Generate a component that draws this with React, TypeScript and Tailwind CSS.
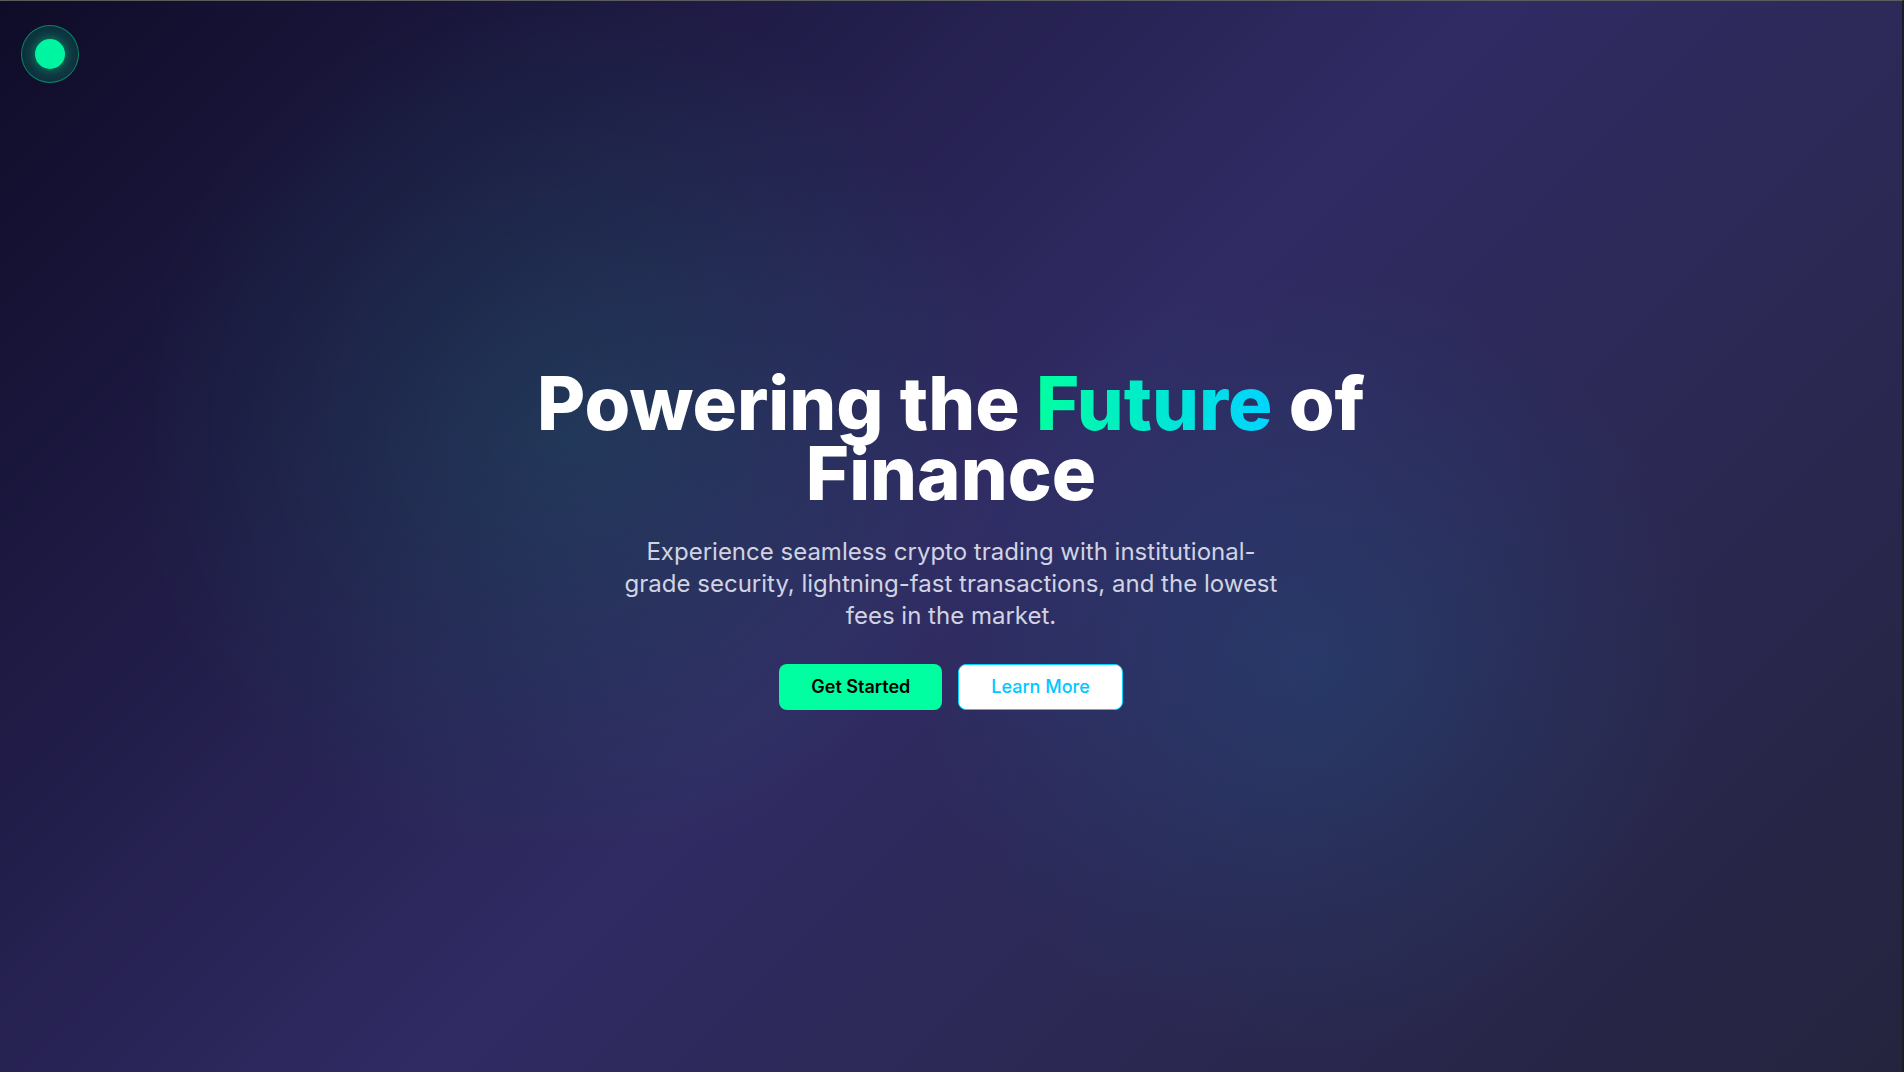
export default function App() {
  return (
    <div className="relative flex min-h-screen w-full flex-col items-center justify-center overflow-hidden border-t border-r-2 border-t-[#5c5c5c] border-r-[#1c1c24] bg-[radial-gradient(circle_at_30%_40%,rgba(0,255,170,0.1),transparent_30%),radial-gradient(circle_at_69%_62%,rgba(0,200,255,0.1),transparent_27%),linear-gradient(135deg,#0f0c29_0%,#302b63_50%,#24243e_100%)] font-['Inter',sans-serif]">
      <div className="absolute left-[21px] top-[24px] flex h-[58px] w-[58px] items-center justify-center rounded-full border border-[#00ffa0]/40 bg-[#00ffa0]/15">
        <div className="h-[30px] w-[30px] rounded-full bg-[#00f5a0] shadow-[0_0_12px_rgba(0,255,160,0.5)]" />
      </div>

      <main className="flex flex-col items-center px-6 pt-[4px] text-center">
        <h1 className="text-[74px] font-extrabold leading-[70px] text-white">
          Powering the{" "}
          <span className="bg-[linear-gradient(90deg,#00ffa0,#00d4ff)] bg-clip-text text-transparent">
            Future
          </span>{" "}
          of
          <br />
          Finance
        </h1>
        <p className="mt-7 max-w-2xl text-2xl leading-8 text-[#d2d3e2]">
          Experience seamless crypto trading with institutional-grade security,
          lightning-fast transactions, and the lowest fees in the market.
        </p>
        <div className="mt-8 flex gap-4">
          <button className="rounded-lg bg-[#00ffa0] px-8 py-2 text-lg font-semibold leading-7 text-black">
            Get Started
          </button>
          <button className="rounded-lg border border-[#00d4ff] bg-white px-8 py-2 text-lg font-medium leading-7 text-[#00c8ff]">
            Learn More
          </button>
        </div>
      </main>
    </div>
  );
}
